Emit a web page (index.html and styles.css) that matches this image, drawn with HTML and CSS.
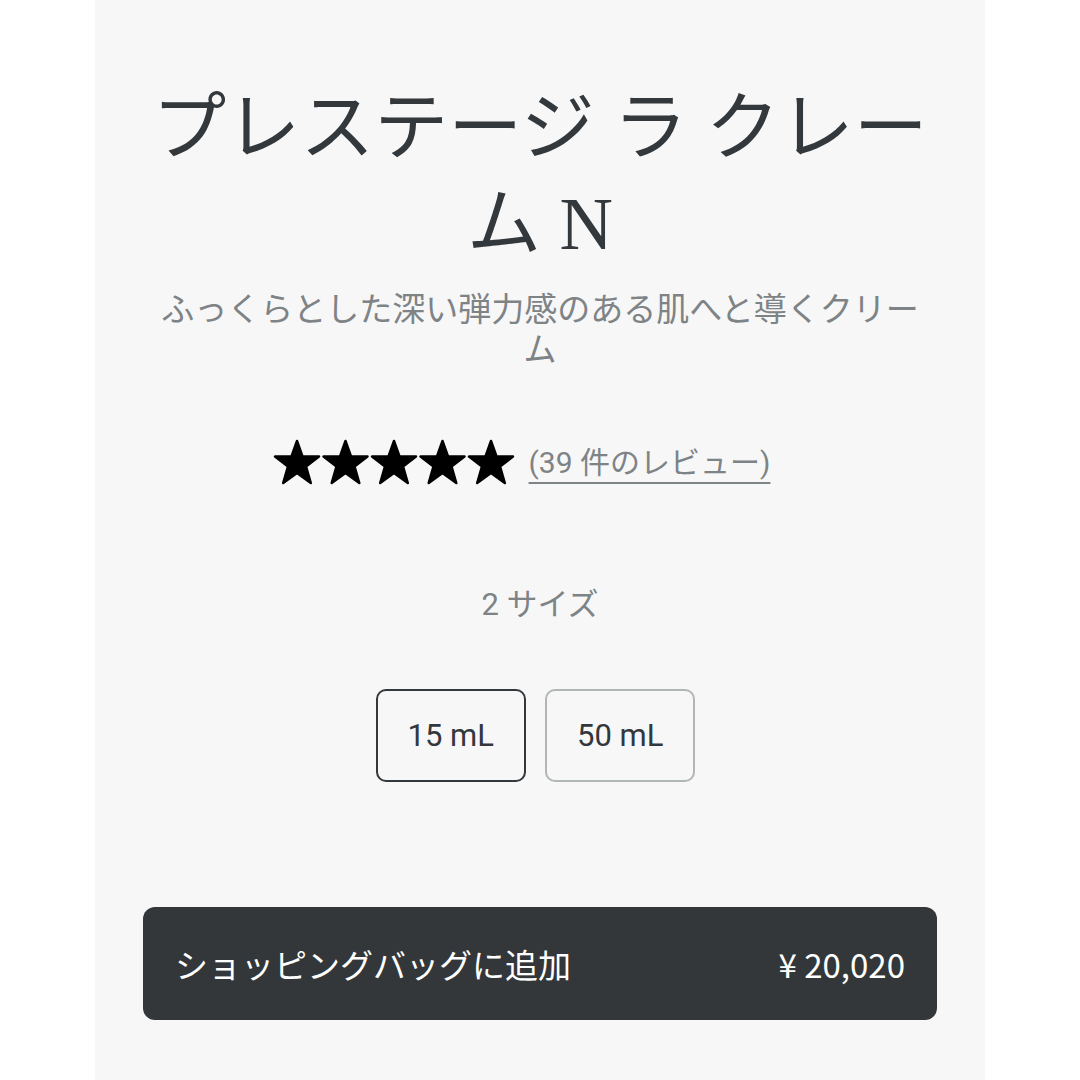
FILE: index.html
```html
<!DOCTYPE html>
<html lang="ja">
<head>
    <meta charset="UTF-8">
    <meta name="viewport" content="width=device-width, initial-scale=1.0">
    <title>プレステージ ラ クレーム N</title>
    <link rel="stylesheet" href="styles.css">
</head>
<body>

<div class="product">
    <h1 class="product-title">プレステージ ラ クレーム N</h1>
    <p class="product-sub">ふっくらとした深い弾力感のある肌へと導くクリーム</p>

    <div class="rating">
        <svg class="stars" width="242" height="48" viewBox="0 0 242 48">
            <defs>
                <polygon id="star" points="24,2 29.6,17.6 46,17.6 33,27.4 37.8,44 24,34 10.2,44 15,27.4 2,17.6 18.4,17.6"/>
            </defs>
            <use href="#star" x="0"/>
            <use href="#star" x="48.5"/>
            <use href="#star" x="97"/>
            <use href="#star" x="145.5"/>
            <use href="#star" x="194"/>
        </svg>
        <a href="#" class="reviews">(39 件のレビュー)</a>
    </div>

    <div class="size-count">2 サイズ</div>

    <div class="sizes">
        <button class="size selected">15 mL</button>
        <button class="size">50 mL</button>
    </div>

    <button class="add-bag">
        <span>ショッピングバッグに追加</span>
        <span class="price">¥ 20,020</span>
    </button>
</div>

</body>
</html>
```

FILE: styles.css
```css
body {
    margin: 0;
    background: #ffffff;
    font-family: Roboto, "Noto Sans CJK JP", sans-serif;
}
.product {
    width: 890px;
    min-height: 100vh;
    margin: 0 auto;
    padding: 80px 48px 40px;
    box-sizing: border-box;
    background: #f7f7f7;
    display: flex;
    flex-direction: column;
    align-items: center;
    text-align: center;
}
.product-title {
    margin: 0;
    font-family: "Liberation Serif", "Noto Sans CJK JP", serif;
    font-size: 74px;
    line-height: 96px;
    font-weight: 400;
    color: #33383c;
}
.product-sub {
    max-width: 780px;
    margin: 15px 0 0;
    font-family: "Noto Sans CJK JP", sans-serif;
    font-size: 33px;
    line-height: 40px;
    color: #7e8386;
}
.rating {
    margin-top: 72px;
    padding-right: 37px;
    display: flex;
    align-items: center;
    gap: 14px;
}
.stars {
    display: block;
}
.stars use {
    fill: #000;
    stroke: #000;
    stroke-width: 2.5;
    stroke-linejoin: round;
}
.reviews {
    font-size: 30px;
    line-height: 48px;
    color: #7e8386;
    text-decoration: underline;
    text-decoration-thickness: 2px;
    text-underline-offset: 9px;
}
.size-count {
    margin-top: 98px;
    font-size: 31px;
    line-height: 40px;
    color: #7e8386;
}
.sizes {
    margin-top: 64px;
    margin-right: 9px;
    display: flex;
    gap: 19px;
}
.size {
    height: 93px;
    padding: 0 30px;
    background: transparent;
    border: 2px solid #b1b6b7;
    border-radius: 10px;
    font-family: Roboto, sans-serif;
    font-size: 31px;
    font-weight: 400;
    color: #33383c;
}
.size.selected {
    border-color: #33383c;
}
.add-bag {
    margin-top: 125px;
    width: 100%;
    height: 113px;
    padding: 0 32px;
    display: flex;
    justify-content: space-between;
    align-items: center;
    background: #33373a;
    border: none;
    border-radius: 12px;
    font-family: "Noto Sans CJK JP", sans-serif;
    font-size: 33px;
    color: #ffffff;
}
```
